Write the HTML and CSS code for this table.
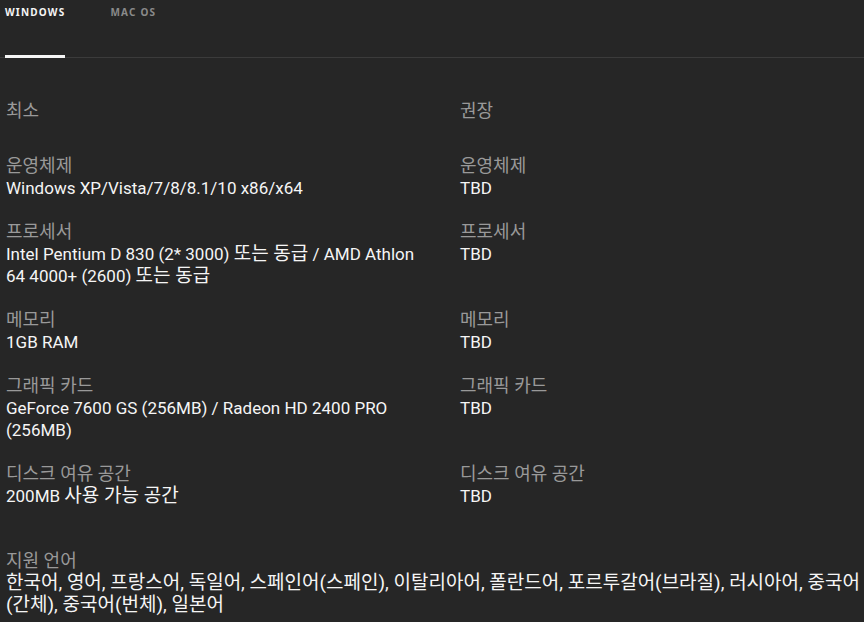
FILE: index.html
```html
<!DOCTYPE html>
<html lang="ko">

<head>
    <meta charset="UTF-8">
    <meta name="viewport" content="width=device-width, initial-scale=1.0">
    <title>시스템 요구 사항</title>
    <link rel="stylesheet" href="styles.css">
</head>

<body>
    <div class="tabs">
        <div class="tab active">WINDOWS</div>
        <div class="tab">MAC OS</div>
    </div>

    <div class="specs">
        <div class="column">
            <div class="heading">최소</div>
            <div class="item">
                <div class="label">운영체제</div>
                <div class="value">Windows XP/Vista/7/8/8.1/10 x86/x64</div>
            </div>
            <div class="item">
                <div class="label">프로세서</div>
                <div class="value">Intel Pentium D 830 (2* 3000) <span class="ko">또는 동급</span> / AMD Athlon 64 4000+ (2600) <span class="ko">또는 동급</span></div>
            </div>
            <div class="item">
                <div class="label">메모리</div>
                <div class="value">1GB RAM</div>
            </div>
            <div class="item">
                <div class="label">그래픽 카드</div>
                <div class="value">GeForce 7600 GS (256MB) / Radeon HD 2400 PRO (256MB)</div>
            </div>
            <div class="item">
                <div class="label">디스크 여유 공간</div>
                <div class="value">200MB <span class="ko">사용 가능 공간</span></div>
            </div>
        </div>
        <div class="column">
            <div class="heading">권장</div>
            <div class="item">
                <div class="label">운영체제</div>
                <div class="value">TBD</div>
            </div>
            <div class="item">
                <div class="label">프로세서</div>
                <div class="value">TBD<br>&nbsp;</div>
            </div>
            <div class="item">
                <div class="label">메모리</div>
                <div class="value">TBD</div>
            </div>
            <div class="item">
                <div class="label">그래픽 카드</div>
                <div class="value">TBD<br>&nbsp;</div>
            </div>
            <div class="item">
                <div class="label">디스크 여유 공간</div>
                <div class="value">TBD</div>
            </div>
        </div>
    </div>

    <div class="languages">
        <div class="label">지원 언어</div>
        <div class="value ko">한국어, 영어, 프랑스어, 독일어, 스페인어(스페인), 이탈리아어, 폴란드어, 포르투갈어(브라질), 러시아어, 중국어(간체), 중국어(번체), 일본어</div>
    </div>
</body>

</html>
```

FILE: styles.css
```css
body {
    margin: 0;
    background-color: #262626;
    color: #f5f5f5;
    font-family: Roboto, "Noto Sans CJK KR", sans-serif;
    font-size: 17px;
    line-height: 22px;
    overflow: hidden;
}

.tabs {
    display: flex;
    gap: 45px;
    padding-left: 5px;
    border-bottom: 1px solid #3b3b3b;
    height: 57px;
}

.tab {
    font-family: "Noto Sans", sans-serif;
    font-size: 10px;
    font-weight: bold;
    letter-spacing: 1.2px;
    line-height: 24px;
    color: #8a8a8a;
    box-sizing: border-box;
    height: 58px;
}

.tab.active {
    color: #f5f5f5;
    border-bottom: 3px solid #f5f5f5;
}

.specs {
    display: grid;
    grid-template-columns: 424px 1fr;
    column-gap: 30px;
    padding: 42px 0 0 6px;
}

.heading {
    color: #999;
    font-size: 18px;
    margin-bottom: 33px;
}

.item {
    margin-bottom: 22px;
}

.label {
    color: #999;
    font-size: 18px;
}

.value {
    color: #f5f5f5;
}

.ko {
    font-size: 19px;
    line-height: 22px;
}

.languages {
    padding: 21px 0 0 6px;
}
```
